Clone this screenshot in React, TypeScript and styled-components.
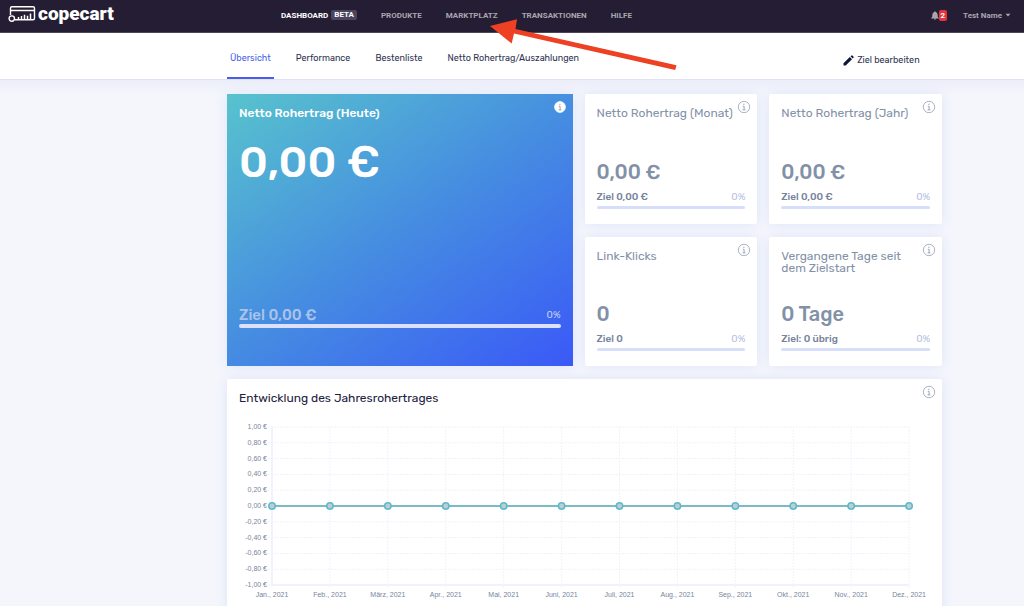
import React from "react";
import styled, { createGlobalStyle } from "styled-components";

const ui = `Rubik, Inter, Roboto, "Liberation Sans", sans-serif`;

const GlobalStyle = createGlobalStyle`
  * { box-sizing: border-box; }
  body { margin: 0; background: #f4f6fc; font-family: ${ui}; color: #1d2140; }
  button { border: 0; padding: 0; background: none; font: inherit; color: inherit; cursor: pointer; }
  a { color: inherit; text-decoration: none; }
  h1, h2, p, ul { margin: 0; padding: 0; }
`;

const Shell = styled.div`
  height: 100vh;
  overflow-y: auto;
  scrollbar-width: none;
`;

const TopBar = styled.header`
  position: relative;
  display: flex;
  height: 33px;
  padding: 0 13px 2px 8px;
  background: #251d33;
  border-bottom: 1px solid #4b4658;
  font-family: Roboto, "Liberation Sans", sans-serif;
  font-size: 8px;
  font-weight: 700;
  color: #a9a6b0;
`;

const Brand = styled.a`
  display: flex;
  flex: 0 0 273px;
  align-items: center;
  gap: 2px;
  padding-bottom: 2px;
  color: #fff;
`;

const BrandName = styled.span`
  font-size: 19px;
  line-height: 24px;
  font-weight: 900;
`;

const MainNav = styled.nav`
  display: flex;
  flex: 1;
  align-items: center;
  gap: 24px;
`;

const MainLink = styled.a<{ $active?: boolean }>`
  display: flex;
  align-items: center;
  gap: 3px;
  color: ${(p) => (p.$active ? "#fff" : "inherit")};
`;

const Beta = styled.span`
  padding: 0 3px;
  border-radius: 2px;
  background: #4b4560;
  line-height: 10px;
`;

const Account = styled.div`
  display: flex;
  align-items: center;
  gap: 16px;
`;

const Bell = styled.button`
  display: flex;
  align-items: center;
`;

const Count = styled.span`
  padding: 0 2px;
  border-radius: 2px;
  background: #e8333c;
  color: #fff;
  line-height: 11px;
`;

const UserMenu = styled.button`
  display: flex;
  align-items: center;
  gap: 3px;
`;

const Tabs = styled.nav`
  display: flex;
  align-items: stretch;
  height: 47px;
  padding: 0 10% 0 227px;
  gap: 19px;
  background: #fff;
  border-bottom: 1px solid #dfe2f0;
  font-size: 9px;
`;

const Tab = styled.a<{ $active?: boolean }>`
  display: flex;
  align-items: center;
  padding: 5px 3px 0;
  border-bottom: 2px solid ${(p) => (p.$active ? "#4a5fe8" : "transparent")};
  color: ${(p) => (p.$active ? "#4a5fe8" : "#2d3350")};
`;

const EditGoal = styled.button`
  display: flex;
  align-items: center;
  gap: 3px;
  margin: 0 2px 0 auto;
  padding-top: 8px;
  color: #2d3350;
`;

const Board = styled.main`
  display: grid;
  grid-template-columns: 2fr 1fr 1fr;
  grid-template-rows: minmax(130px, auto) minmax(129px, auto) auto;
  gap: 13px 12px;
  padding: 14px 8% 13px 227px;
  background: linear-gradient(#ebeef9, #f4f6fc 14px);
`;

const Card = styled.section`
  position: relative;
  display: flex;
  flex-direction: column;
  padding: 13px 12px 12px;
  border-radius: 2px;
  background: #fff;
  box-shadow: 0 0 12px #dfe4f8;
  color: #8391a8;
`;

const Hero = styled(Card)`
  grid-row: span 2;
  border-radius: 0;
  background: linear-gradient(145deg, #58c3cd, #468fe0 48%, #3a59f7);
  color: #fff;
`;

const ChartCard = styled(Card)`
  grid-column: 1 / -1;
  color: #1d2140;
`;

const Title = styled.h2<{ $medium?: boolean }>`
  padding-right: 8px;
  font-size: 12px;
  line-height: 12px;
  font-weight: ${(p) => (p.$medium ? 500 : 400)};
`;

const Info = styled.button`
  position: absolute;
  top: 6px;
  right: 6px;
  display: flex;
`;

const HeroValue = styled.p`
  margin-top: 16px;
  font-size: 44px;
  line-height: 54px;
  font-weight: 500;
`;

const Value = styled.p`
  margin-top: auto;
  font-size: 20px;
  line-height: 22px;
  font-weight: 500;
`;

const Goal = styled.div<{ $hero?: boolean }>`
  display: flex;
  align-items: center;
  justify-content: space-between;
  margin-top: ${(p) => (p.$hero ? "auto" : "8px")};
  font-size: 10px;
  line-height: ${(p) => (p.$hero ? "18px" : "12px")};
  color: ${(p) => (p.$hero ? "#c3d3f1" : "#b3c0df")};
`;

const GoalText = styled.span<{ $hero?: boolean }>`
  font-size: ${(p) => (p.$hero ? "15px" : "10px")};
  font-weight: 500;
  color: ${(p) => (p.$hero ? "#a9c3ea" : "#76849c")};
`;

const Track = styled.div<{ $hero?: boolean }>`
  height: ${(p) => (p.$hero ? "4px" : "3px")};
  margin: ${(p) => (p.$hero ? "0 0 26px" : "3px 0")};
  border-radius: 2px;
  background: ${(p) => (p.$hero ? "#dde0fb" : "#d6defb")};
`;

const Chart = styled.svg`
  display: block;
  width: 100%;
  height: auto;
  margin-top: 15px;
  font-family: "Liberation Sans", sans-serif;
  font-size: 7px;
  fill: #77859d;
`;

const Pointer = styled.svg`
  position: absolute;
  top: 18px;
  left: 490px;
  z-index: 1;
  pointer-events: none;
`;

function Logo() {
  return (
    <svg width="28" height="18" viewBox="0 0 28 18" fill="none" stroke="#fff" strokeWidth="1.4" aria-hidden="true">
      <path d="M2.5 10V3.2Q2.5 1.7 4 1.7H25Q26.5 1.7 26.5 3.2V13.3Q26.5 14.8 25 14.8H7M2.500 5.500H26.500" />
      <circle cx="3.800" cy="13.600" r="2.700" />
      <path d="M10.500 12v2.500M13.500 11v3.500M16.500 9.800v4.700M19.500 10.800v3.700M22.500 8.500v6" strokeWidth="1.500" />
    </svg>
  );
}

function InfoButton({ solid }: { solid?: boolean }) {
  return (
    <Info aria-label="Info">
      <svg width="14" height="14" viewBox="0 0 14 14" fill="none">
        <circle cx="7" cy="7" r={solid ? 5.4 : 5.7} fill={solid ? "#fff" : "none"} stroke={solid ? "#fff" : "#97a2b6"} strokeWidth="0.8" />
        <path d="M6.900 3.700v1.300M5.800 6.300H7.100V9.900M5.600 9.900h2.800" stroke="#9aa4b5" strokeWidth="1" />
      </svg>
    </Info>
  );
}

function StatCard(props: { title: string; value: string; goal: string }) {
  return (
    <Card>
      <Title>{props.title}</Title>
      <InfoButton />
      <Value>{props.value}</Value>
      <Goal>
        <GoalText>{props.goal}</GoalText>
        <span>0%</span>
      </Goal>
      <Track />
    </Card>
  );
}

const months = ["Jan.", "Feb.", "März", "Apr.", "Mai", "Juni", "Juli", "Aug.", "Sep.", "Okt.", "Nov.", "Dez."];
const amounts = ["1,00", "0,80", "0,60", "0,40", "0,20", "0,00", "-0,20", "-0,40", "-0,60", "-0,80", "-1,00"];
const left = 33;
const right = 670;
const top = 8;
const bottom = 166;
const monthX = (i: number) => left + ((right - left) / 11) * i;
const amountY = (i: number) => top + ((bottom - top) / 10) * i;

function YearChart() {
  return (
    <Chart viewBox="0 0 691 200" role="img" aria-label="Entwicklung des Jahresrohertrages" overflow="visible">
      <g stroke="#f1f3fb" strokeDasharray="2 1">
        {amounts.map((a, i) => (
          <line key={a} x1={left - 4} x2={right} y1={amountY(i)} y2={amountY(i)} />
        ))}
        {months.map((m, i) => (
          <line key={m} x1={monthX(i)} x2={monthX(i)} y1={top} y2={bottom + 4} />
        ))}
      </g>
      <path d={`M${left} ${top}V${bottom}H${right}`} fill="none" stroke="#f0f3fd" strokeWidth="2" />
      {amounts.map((a, i) => (
        <text key={a} x={left - 5} y={amountY(i) + 2} textAnchor="end">{a} €</text>
      ))}
      {months.map((m, i) => (
        <text key={m} x={monthX(i)} y={bottom + 12} textAnchor="middle">{m}, 2021</text>
      ))}
      <line x1={left} x2={right} y1={amountY(5)} y2={amountY(5)} stroke="#52a5b4" strokeWidth="1.7" />
      <g fill="#c5cad2" stroke="#55bccb" strokeWidth="1.5">
        {months.map((m, i) => (
          <circle key={m} cx={monthX(i)} cy={amountY(5)} r="3.2" />
        ))}
      </g>
    </Chart>
  );
}

export default function App() {
  return (
    <Shell>
      <GlobalStyle />
      <TopBar>
        <Brand href="#">
          <Logo />
          <BrandName>copecart</BrandName>
        </Brand>
        <MainNav>
          <MainLink href="#" $active>DASHBOARD <Beta>BETA</Beta></MainLink>
          <MainLink href="#">PRODUKTE</MainLink>
          <MainLink href="#">MARKTPLATZ</MainLink>
          <MainLink href="#">TRANSAKTIONEN</MainLink>
          <MainLink href="#">HILFE</MainLink>
        </MainNav>
        <Account>
          <Bell aria-label="Benachrichtigungen">
            <svg width="8" height="9" viewBox="0 0 8 9" fill="#a9a6b0">
              <path d="M4 0.3q.7 0 .7.7Q6.7 1.6 6.7 4v1.7L7.8 7v.4H.2V7l1.1-1.3V4Q1.3 1.6 3.3 1 3.3.3 4 .3zM3 7.8h2Q4.900 8.800 4 8.800 3.100 8.800 3 7.800z" />
            </svg>
            <Count>2</Count>
          </Bell>
          <UserMenu>
            Test Name
            <svg width="6" height="4" viewBox="0 0 6 4" fill="#a9a6b0"><path d="M.5 .7h5L3 3.500z" /></svg>
          </UserMenu>
        </Account>
        <Pointer width="190" height="54" viewBox="0 0 190 54" fill="#ee4023" aria-hidden="true">
          <path d="M0 8L27 1.300 25.500 11 186.500 47.300 185.200 52 24 15.500 21.700 25.500z" />
        </Pointer>
      </TopBar>
      <Tabs>
        <Tab href="#" $active>Übersicht</Tab>
        <Tab href="#">Performance</Tab>
        <Tab href="#">Bestenliste</Tab>
        <Tab href="#">Netto Rohertrag/Auszahlungen</Tab>
        <EditGoal>
          <svg width="11" height="11" viewBox="0 0 11 11" fill="#10163a">
            <path d="M.5 8.300L6.800 2 9 4.200 2.700 10.500H.5zM7.500 1.300L8.500.4q.4-.3.800 0l1.300 1.300q.3.4 0 .8L9.700 3.500z" />
          </svg>
          Ziel bearbeiten
        </EditGoal>
      </Tabs>
      <Board>
        <Hero>
          <Title $medium>Netto Rohertrag (Heute)</Title>
          <InfoButton solid />
          <HeroValue>0,00 €</HeroValue>
          <Goal $hero>
            <GoalText $hero>Ziel 0,00 €</GoalText>
            <span>0%</span>
          </Goal>
          <Track $hero />
        </Hero>
        <StatCard title="Netto Rohertrag (Monat)" value="0,00 €" goal="Ziel 0,00 €" />
        <StatCard title="Netto Rohertrag (Jahr)" value="0,00 €" goal="Ziel 0,00 €" />
        <StatCard title="Link-Klicks" value="0" goal="Ziel 0" />
        <StatCard title="Vergangene Tage seit dem Zielstart" value="0 Tage" goal="Ziel: 0 übrig" />
        <ChartCard>
          <Title>Entwicklung des Jahresrohertrages</Title>
          <InfoButton />
          <YearChart />
        </ChartCard>
      </Board>
    </Shell>
  );
}
